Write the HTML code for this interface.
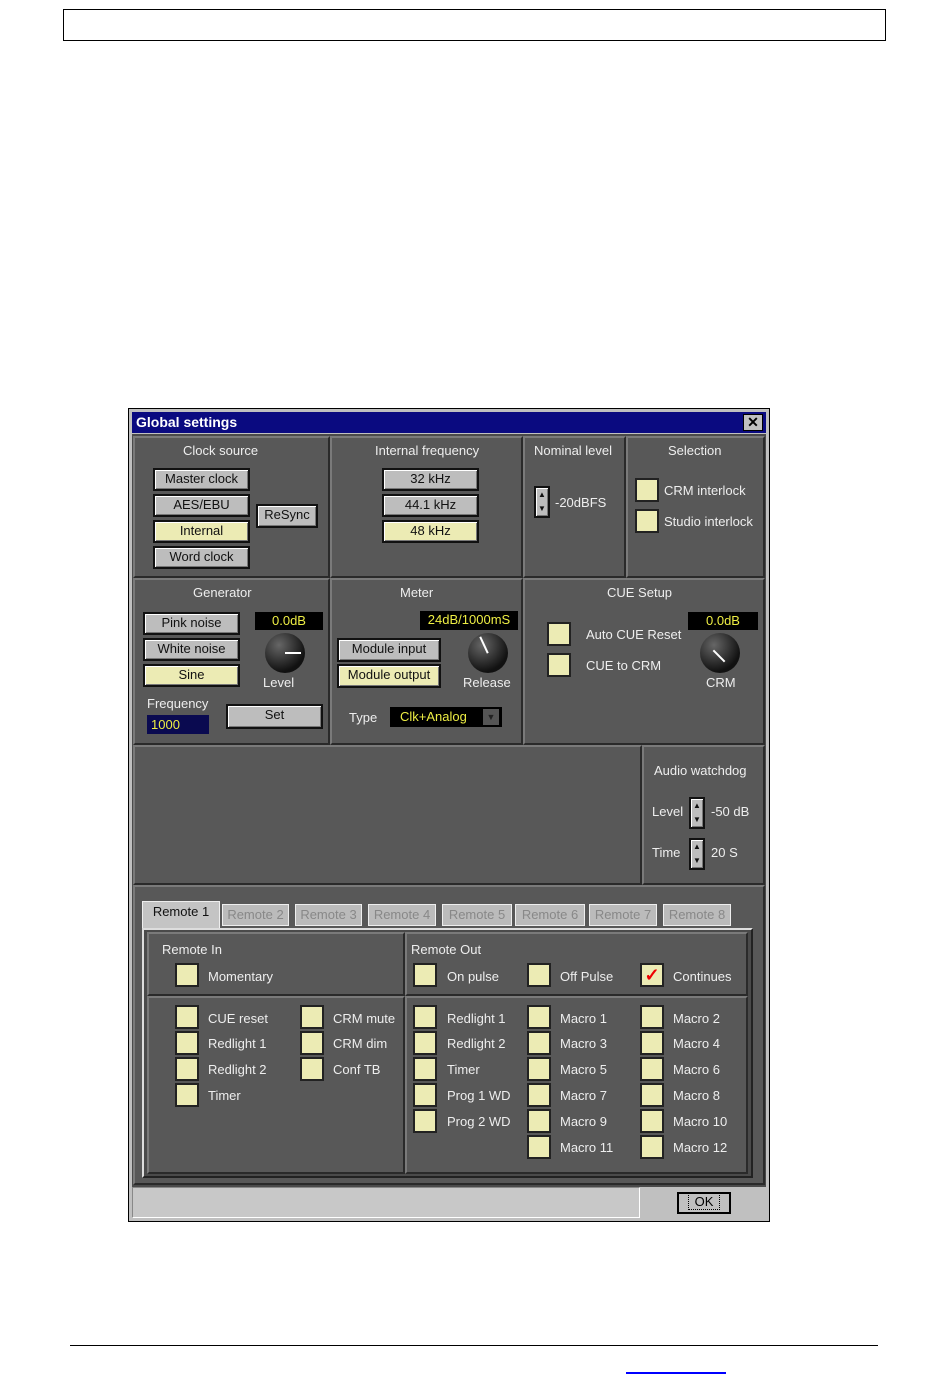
<!DOCTYPE html><html><head><style>
body{margin:0;width:950px;height:1385px;background:#fff;position:relative;font-family:"Liberation Sans",sans-serif;overflow:hidden}
div{position:absolute;box-sizing:border-box}
.p{background:#585858;border:2px solid;border-color:#7a7a7a #2a2a2a #2a2a2a #7a7a7a}
.t{color:#eee;font-size:13px;white-space:nowrap}
.b{background:#bdbdbd;border:2px solid #111;box-shadow:inset 1px 1px #fff,inset -1px -1px #777;font-size:13px;text-align:center;color:#111;line-height:17px}
.y{background:#ecebb4}
.c{width:24px;height:24px;background:#ecebb4;border:2px solid #222}
.d{background:#000;color:#ee4;font-size:13px;text-align:center;line-height:17px}
.k{width:40px;height:40px;border-radius:50%;background:radial-gradient(circle at 35% 30%,#666,#111 70%)}
.tab{height:22px;background:#bbb;border:1px solid #eee;color:#888;font-size:13px;text-align:center;line-height:20px;white-space:nowrap;overflow:hidden}
</style></head><body>
<div style="left:63px;top:9px;width:823px;height:32px;border:1px solid #000"></div>
<div style="left:70px;top:1345px;width:808px;height:1px;background:#000"></div>
<div style="left:626px;top:1372px;width:100px;height:2px;background:#00f"></div>

<div style="left:128px;top:408px;width:642px;height:814px;background:#c0c0c0;border:1px solid #000"></div>
<div style="left:132px;top:412px;width:634px;height:21px;background:#0a0a80;color:#fff;font-weight:bold;font-size:14px;line-height:21px;padding-left:4px">Global settings</div>
<div style="left:743px;top:414px;width:20px;height:17px;background:#c0c0c0;border:1px solid #000;font-size:14px;text-align:center;line-height:15px;font-weight:bold">✕</div>
<div style="left:132px;top:434px;width:634px;height:753px;background:#4a4a4a"></div>

<div class="p" style="left:133px;top:436px;width:197px;height:142px"></div>
<div class="p" style="left:330px;top:436px;width:193px;height:142px"></div>
<div class="p" style="left:523px;top:436px;width:103px;height:142px"></div>
<div class="p" style="left:626px;top:436px;width:139px;height:142px"></div>
<div class="t" style="left:183px;top:443px">Clock source</div>
<div class="t" style="left:375px;top:443px">Internal frequency</div>
<div class="t" style="left:534px;top:443px">Nominal level</div>
<div class="t" style="left:668px;top:443px">Selection</div>
<div class="b" style="left:153px;top:468px;width:97px;height:23px">Master clock</div>
<div class="b" style="left:153px;top:494px;width:97px;height:23px">AES/EBU</div>
<div class="b y" style="left:153px;top:520px;width:97px;height:23px">Internal</div>
<div class="b" style="left:153px;top:546px;width:97px;height:23px">Word clock</div>
<div class="b" style="left:256px;top:504px;width:62px;height:24px">ReSync</div>
<div class="b" style="left:382px;top:468px;width:97px;height:23px">32 kHz</div>
<div class="b" style="left:382px;top:494px;width:97px;height:23px">44.1 kHz</div>
<div class="b y" style="left:382px;top:520px;width:97px;height:23px">48 kHz</div>
<div class="b" style="left:534px;top:486px;width:16px;height:32px;font-size:8px;line-height:14px">▲<br>▼</div>
<div class="t" style="left:555px;top:495px">-20dBFS</div>
<div class="c" style="left:635px;top:478px"></div><div class="t" style="left:664px;top:483px">CRM interlock</div>
<div class="c" style="left:635px;top:509px"></div><div class="t" style="left:664px;top:514px">Studio interlock</div>

<div class="p" style="left:133px;top:578px;width:197px;height:167px"></div>
<div class="p" style="left:330px;top:578px;width:193px;height:167px"></div>
<div class="p" style="left:523px;top:578px;width:242px;height:167px"></div>
<div class="t" style="left:193px;top:585px">Generator</div>
<div class="t" style="left:400px;top:585px">Meter</div>
<div class="t" style="left:607px;top:585px">CUE Setup</div>
<div class="b" style="left:143px;top:612px;width:97px;height:23px">Pink noise</div>
<div class="b" style="left:143px;top:638px;width:97px;height:23px">White noise</div>
<div class="b y" style="left:143px;top:664px;width:97px;height:23px">Sine</div>
<div class="d" style="left:255px;top:612px;width:68px;height:18px">0.0dB</div>
<div class="k" style="left:265px;top:633px"></div>
<div style="left:285px;top:652px;width:16px;height:2px;background:#fff"></div>
<div class="t" style="left:263px;top:675px">Level</div>
<div class="t" style="left:147px;top:696px">Frequency</div>
<div style="left:147px;top:715px;width:62px;height:19px;background:#0a0a50;color:#ee4;font-size:13px;line-height:19px;padding-left:4px">1000</div>
<div class="b" style="left:226px;top:704px;width:97px;height:25px">Set</div>
<div class="d" style="left:420px;top:611px;width:98px;height:19px">24dB/1000mS</div>
<div class="k" style="left:468px;top:633px"></div>
<div style="left:483px;top:636px;width:2px;height:18px;background:#fff;transform:rotate(-25deg)"></div>
<div class="t" style="left:463px;top:675px">Release</div>
<div class="b" style="left:337px;top:638px;width:104px;height:24px">Module input</div>
<div class="b y" style="left:337px;top:664px;width:104px;height:24px">Module output</div>
<div class="t" style="left:349px;top:710px">Type</div>
<div style="left:390px;top:707px;width:112px;height:20px;background:#000;color:#ee4;font-size:13px;line-height:20px;padding-left:10px">Clk+Analog</div>
<div style="left:483px;top:709px;width:16px;height:16px;background:#555;color:#222;font-size:9px;text-align:center;line-height:16px">▼</div>
<div class="c" style="left:547px;top:622px"></div><div class="t" style="left:586px;top:627px">Auto CUE Reset</div>
<div class="c" style="left:547px;top:653px"></div><div class="t" style="left:586px;top:658px">CUE to CRM</div>
<div class="d" style="left:688px;top:612px;width:70px;height:18px">0.0dB</div>
<div class="k" style="left:700px;top:633px"></div>
<div style="left:718px;top:648px;width:2px;height:16px;background:#fff;transform:rotate(-45deg)"></div>
<div class="t" style="left:706px;top:675px">CRM</div>

<div class="p" style="left:133px;top:745px;width:509px;height:140px"></div>
<div class="p" style="left:642px;top:745px;width:123px;height:140px"></div>
<div class="t" style="left:654px;top:763px">Audio watchdog</div>
<div class="t" style="left:652px;top:804px">Level</div>
<div class="b" style="left:689px;top:797px;width:16px;height:32px;font-size:8px;line-height:14px">▲<br>▼</div>
<div class="t" style="left:711px;top:804px">-50 dB</div>
<div class="t" style="left:652px;top:845px">Time</div>
<div class="b" style="left:689px;top:838px;width:16px;height:32px;font-size:8px;line-height:14px">▲<br>▼</div>
<div class="t" style="left:711px;top:845px">20 S</div>

<div class="p" style="left:133px;top:885px;width:632px;height:300px"></div>
<div class="tab" style="left:142px;top:901px;width:78px;height:29px;color:#111;background:#c4c4c4;border-bottom:none">Remote 1</div>
<div class="tab" style="left:222px;top:904px;width:67px">Remote 2</div>
<div class="tab" style="left:295px;top:904px;width:67px">Remote 3</div>
<div class="tab" style="left:368px;top:904px;width:68px">Remote 4</div>
<div class="tab" style="left:442px;top:904px;width:70px">Remote 5</div>
<div class="tab" style="left:515px;top:904px;width:70px">Remote 6</div>
<div class="tab" style="left:589px;top:904px;width:68px">Remote 7</div>
<div class="tab" style="left:663px;top:904px;width:68px">Remote 8</div>
<div style="left:142px;top:928px;width:611px;height:250px;border:2px solid #ddd;border-right-color:#222;border-bottom-color:#222;background:#4a4a4a"></div>
<div class="p" style="left:147px;top:932px;width:258px;height:64px"></div>
<div class="p" style="left:405px;top:932px;width:343px;height:64px"></div>
<div class="p" style="left:147px;top:996px;width:258px;height:178px"></div>
<div class="p" style="left:405px;top:996px;width:343px;height:178px"></div>
<div class="t" style="left:162px;top:942px">Remote In</div>
<div class="t" style="left:411px;top:942px">Remote Out</div>
<div class="c" style="left:175px;top:963px"></div><div class="t" style="left:208px;top:969px">Momentary</div>
<div class="c" style="left:413px;top:963px"></div><div class="t" style="left:447px;top:969px">On pulse</div>
<div class="c" style="left:527px;top:963px"></div><div class="t" style="left:560px;top:969px">Off Pulse</div>
<div class="c" style="left:640px;top:963px;color:#e00;font-size:18px;font-weight:bold;line-height:20px;text-align:center">✓</div><div class="t" style="left:673px;top:969px">Continues</div>

<div class="c" style="left:175px;top:1005px"></div><div class="t" style="left:208px;top:1011px">CUE reset</div>
<div class="c" style="left:175px;top:1031px"></div><div class="t" style="left:208px;top:1036px">Redlight 1</div>
<div class="c" style="left:175px;top:1057px"></div><div class="t" style="left:208px;top:1062px">Redlight 2</div>
<div class="c" style="left:175px;top:1083px"></div><div class="t" style="left:208px;top:1088px">Timer</div>
<div class="c" style="left:300px;top:1005px"></div><div class="t" style="left:333px;top:1011px">CRM mute</div>
<div class="c" style="left:300px;top:1031px"></div><div class="t" style="left:333px;top:1036px">CRM dim</div>
<div class="c" style="left:300px;top:1057px"></div><div class="t" style="left:333px;top:1062px">Conf TB</div>

<div class="c" style="left:413px;top:1005px"></div><div class="t" style="left:447px;top:1011px">Redlight 1</div>
<div class="c" style="left:413px;top:1031px"></div><div class="t" style="left:447px;top:1036px">Redlight 2</div>
<div class="c" style="left:413px;top:1057px"></div><div class="t" style="left:447px;top:1062px">Timer</div>
<div class="c" style="left:413px;top:1083px"></div><div class="t" style="left:447px;top:1088px">Prog 1 WD</div>
<div class="c" style="left:413px;top:1109px"></div><div class="t" style="left:447px;top:1114px">Prog 2 WD</div>

<div class="c" style="left:527px;top:1005px"></div><div class="t" style="left:560px;top:1011px">Macro 1</div>
<div class="c" style="left:527px;top:1031px"></div><div class="t" style="left:560px;top:1036px">Macro 3</div>
<div class="c" style="left:527px;top:1057px"></div><div class="t" style="left:560px;top:1062px">Macro 5</div>
<div class="c" style="left:527px;top:1083px"></div><div class="t" style="left:560px;top:1088px">Macro 7</div>
<div class="c" style="left:527px;top:1109px"></div><div class="t" style="left:560px;top:1114px">Macro 9</div>
<div class="c" style="left:527px;top:1135px"></div><div class="t" style="left:560px;top:1140px">Macro 11</div>
<div class="c" style="left:640px;top:1005px"></div><div class="t" style="left:673px;top:1011px">Macro 2</div>
<div class="c" style="left:640px;top:1031px"></div><div class="t" style="left:673px;top:1036px">Macro 4</div>
<div class="c" style="left:640px;top:1057px"></div><div class="t" style="left:673px;top:1062px">Macro 6</div>
<div class="c" style="left:640px;top:1083px"></div><div class="t" style="left:673px;top:1088px">Macro 8</div>
<div class="c" style="left:640px;top:1109px"></div><div class="t" style="left:673px;top:1114px">Macro 10</div>
<div class="c" style="left:640px;top:1135px"></div><div class="t" style="left:673px;top:1140px">Macro 12</div>

<div style="left:132px;top:1187px;width:508px;height:31px;background:#c8c8c8;border:1px solid;border-color:#888 #fff #fff #888"></div>
<div style="left:677px;top:1192px;width:54px;height:22px;background:#c0c0c0;border:2px solid #000;font-size:13px;text-align:center;line-height:16px"><span style="border:1px dotted #000;padding:0 6px">OK</span></div>
</body></html>
